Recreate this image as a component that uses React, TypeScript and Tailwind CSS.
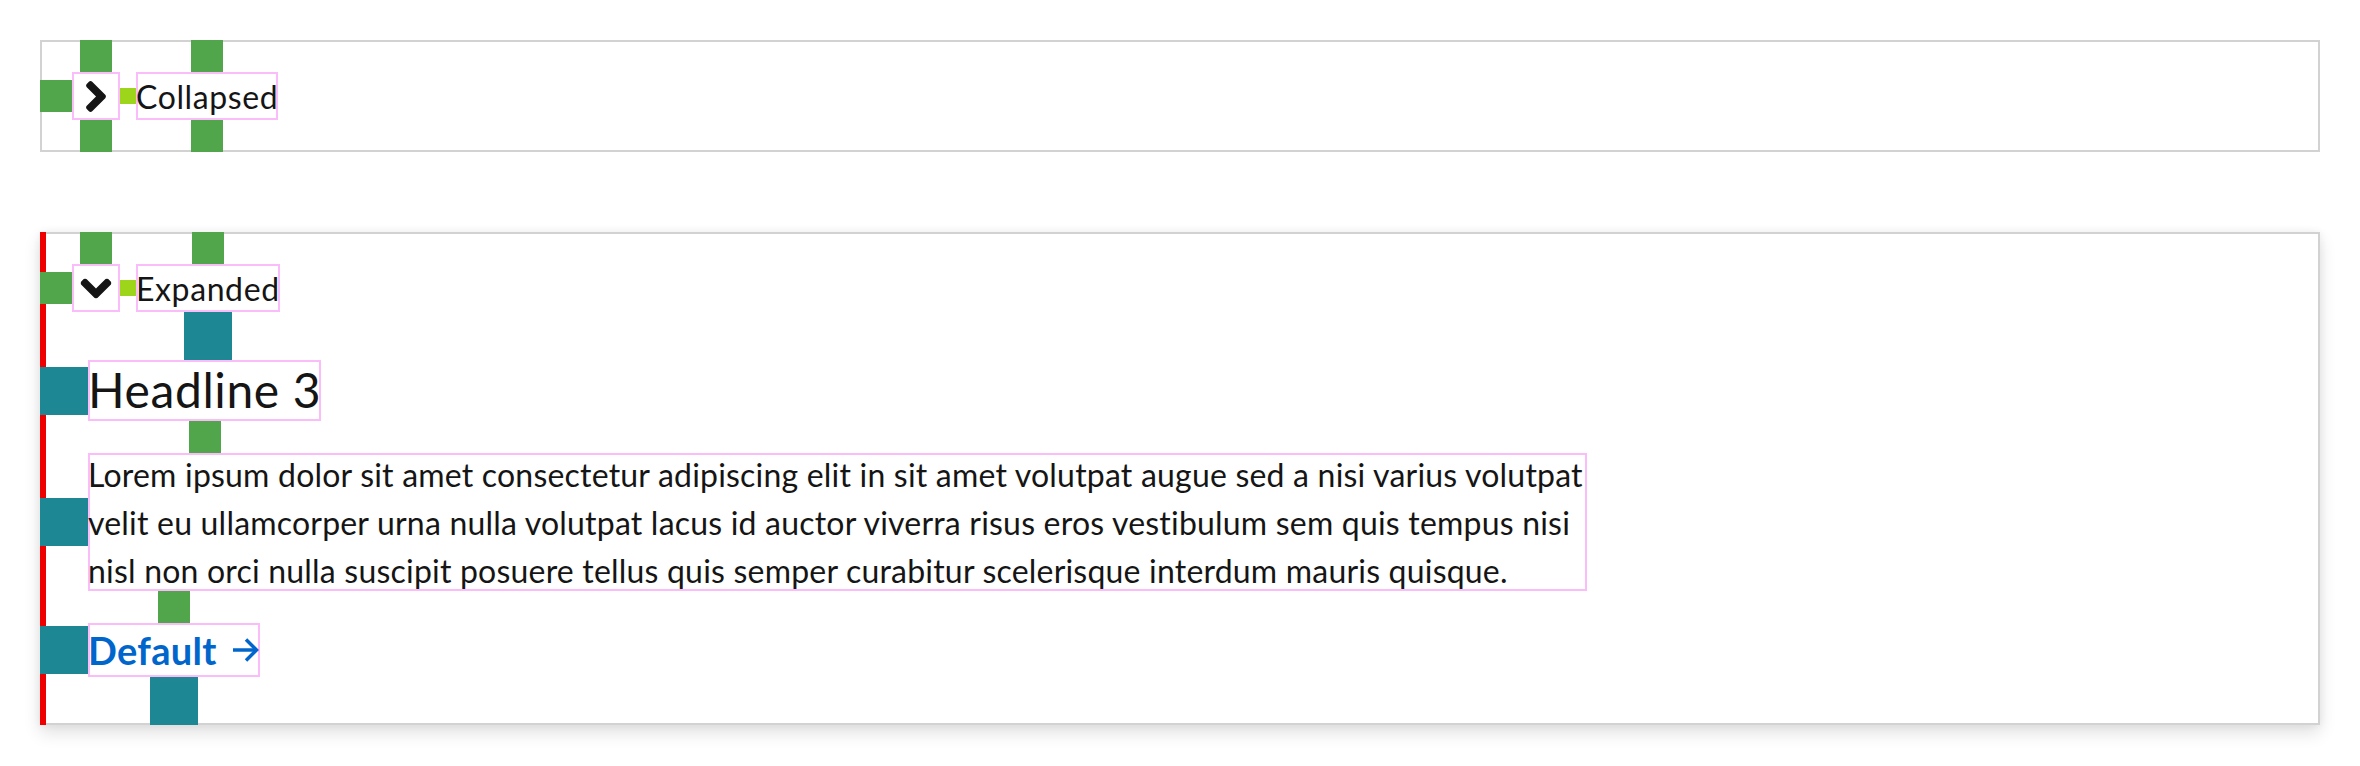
import type { ReactNode } from 'react';

const Chevron = ({ down }: { down?: boolean }) => (
  <svg
    viewBox="24 95 208 322"
    className={down ? 'h-[31px] w-[20px] rotate-90' : 'h-[31px] w-[20px]'}
    fill="#151515"
  >
    <path d="M224.3 273l-136 136c-9.4 9.4-24.6 9.4-33.9 0l-22.6-22.6c-9.4-9.4-9.4-24.6 0-33.9l96.4-96.4-96.4-96.4c-9.4-9.4-9.4-24.6 0-33.9L54.3 103c9.4-9.4 24.6-9.4 33.9 0l136 136c9.5 9.4 9.5 24.6.1 34z" />
  </svg>
);

const ArrowRight = () => (
  <svg viewBox="0 0 27 26" className="h-[26px] w-[27px]" fill="none" stroke="#0066cc" strokeWidth="3.5">
    <path d="M0 13H23" />
    <path d="M13 2.5L23.5 13L13 23.5" />
  </svg>
);

const ToggleRow = ({ label, expanded }: { label: string; expanded?: boolean }) => (
  <div className="flex items-center">
    <div className="relative flex h-12 w-12 items-center justify-center shadow-[inset_0_0_0_2px_#fbbdf9]">
      <Chevron down={expanded} />
      <span className="absolute right-full top-1/2 h-8 w-8 -translate-y-1/2 bg-[#51a64b]" />
      <span className="absolute bottom-full left-1/2 h-8 w-8 -translate-x-1/2 bg-[#51a64b]" />
      {!expanded && (
        <span className="absolute left-1/2 top-full h-8 w-8 -translate-x-1/2 bg-[#51a64b]" />
      )}
    </div>
    <span className="h-4 w-4 bg-[#9dd51a]" />
    <span className="relative h-12 text-[32px] leading-[50px] tracking-[0.6px] shadow-[inset_0_0_0_2px_#fbbdf9]">
      {label}
      <span className="absolute bottom-full left-1/2 h-8 w-8 -translate-x-1/2 bg-[#51a64b]" />
      {expanded ? (
        <span className="absolute left-1/2 top-full h-12 w-12 -translate-x-1/2 bg-[#1d8793]" />
      ) : (
        <span className="absolute left-1/2 top-full h-8 w-8 -translate-x-1/2 bg-[#51a64b]" />
      )}
    </span>
  </div>
);

const Block = ({ children, className }: { children: ReactNode; className: string }) => (
  <div className={`relative shadow-[inset_0_0_0_2px_#fbbdf9] ${className}`}>
    {children}
    <span className="absolute right-full top-1/2 h-12 w-12 -translate-y-1/2 bg-[#1d8793]" />
  </div>
);

export default function App() {
  return (
    <div className="h-[766px] w-[2360px] bg-white px-10 pt-10 font-[Lato,sans-serif] text-[#151515]">
      <div className="bg-white px-8 py-8 shadow-[inset_0_0_0_2px_#d2d2d2]">
        <ToggleRow label="Collapsed" />
      </div>

      <div className="mt-20 bg-white px-8 pb-12 pt-8 shadow-[inset_6px_0_0_0_#ee0000,inset_0_0_0_2px_#d2d2d2,0_8px_16px_0_rgba(3,3,3,0.12),0_0_8px_0_rgba(3,3,3,0.06)]">
        <ToggleRow label="Expanded" expanded />
        <div className="flex flex-col items-start pl-4 pt-12">
          <Block className="h-[61px] text-[48px] leading-[59px] tracking-[0.6px]">
            Headline 3
            <span className="absolute left-1/2 top-full h-8 w-8 -translate-x-1/2 bg-[#51a64b]" />
          </Block>
          <Block className="mt-8 h-[138px] w-[1499px] text-[32px] leading-[48px] tracking-[0.2px]">
            <p className="-mt-[2px]">
              Lorem ipsum dolor sit amet consectetur adipiscing elit in sit amet volutpat augue sed a nisi
              varius volutpat velit eu ullamcorper urna nulla volutpat lacus id auctor viverra risus eros
              vestibulum sem quis tempus nisi nisl non orci nulla suscipit posuere tellus quis semper
              curabitur scelerisque interdum mauris quisque.
            </p>
          </Block>
          <Block className="mt-8 h-[54px]">
            <a className="flex h-[54px] items-center gap-4 text-[38px] font-bold leading-[54px] tracking-[0.3px] text-[#0066cc]">
              Default
              <ArrowRight />
            </a>
            <span className="absolute bottom-full left-1/2 h-8 w-8 -translate-x-1/2 bg-[#51a64b]" />
            <span className="absolute left-1/2 top-full h-12 w-12 -translate-x-1/2 bg-[#1d8793]" />
          </Block>
        </div>
      </div>
    </div>
  );
}
